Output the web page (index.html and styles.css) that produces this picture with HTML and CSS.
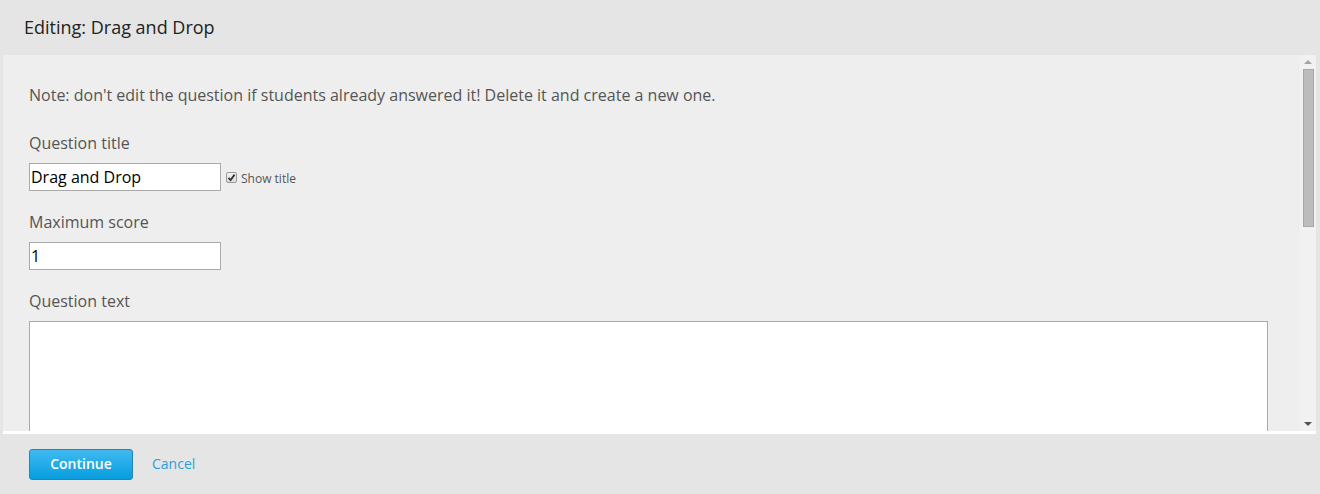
FILE: index.html
```html
<!DOCTYPE html>
<html>
<head>
<meta charset="utf-8">
<link rel="stylesheet" href="styles.css">
</head>
<body>
<div class="header">Editing: Drag and Drop</div>
<div class="panel">
  <div class="scroller">
    <div class="content">
      <p class="note">Note: don't edit the question if students already answered it! Delete it and create a new one.</p>
      <div class="field">
        <div class="label">Question title</div>
        <div class="row">
          <div class="input">Drag and Drop</div>
          <label class="check"><span class="box"><svg width="9" height="9" viewBox="0 0 9 9"><path d="M1.5 4.8 L3.6 7 L7.6 1.6" fill="none" stroke="#333" stroke-width="1.8"/></svg></span>Show title</label>
        </div>
      </div>
      <div class="field">
        <div class="label">Maximum score</div>
        <div class="input">1</div>
      </div>
      <div class="field">
        <div class="label">Question text</div>
        <div class="textarea"></div>
      </div>
    </div>
    <div class="scrollbar">
      <div class="arrow up"></div>
      <div class="thumb"></div>
      <div class="spacer"></div>
      <div class="arrow down"></div>
    </div>
  </div>
</div>
<div class="footer">
  <button class="btn">Continue</button>
  <a class="cancel">Cancel</a>
</div>
</body>
</html>
```
FILE: styles.css
```css
html, body {
  margin: 0;
  padding: 0;
}
body {
  width: 1320px;
  height: 494px;
  overflow: hidden;
  background: #e5e5e5;
  font-family: "Open Sans", "Noto Sans", sans-serif;
  color: #555;
}
.header {
  height: 55px;
  line-height: 55px;
  padding-left: 24px;
  font-size: 18px;
  color: #222;
}
.panel {
  margin: 0 4px 0 3px;
  height: 379px;
  background: #fff;
  padding-bottom: 3px;
  box-sizing: border-box;
}
.scroller {
  display: flex;
  height: 376px;
  background: #eee;
}
.content {
  flex: 1;
  overflow: hidden;
  padding: 29px 32px 0 26px;
}
.note {
  margin: 0 0 26px;
  font-size: 16px;
  line-height: 22px;
}
.field {
  margin-bottom: 20px;
}
.label {
  font-size: 16px;
  line-height: 22px;
  margin-bottom: 9px;
}
.row {
  display: flex;
  align-items: center;
}
.input {
  width: 192px;
  height: 28px;
  box-sizing: border-box;
  border: 1px solid #aaa;
  background: #fff;
  font-size: 16px;
  line-height: 26px;
  padding-left: 1px;
  color: #000;
}
.check {
  display: flex;
  align-items: center;
  margin-left: 5px;
  font-size: 12px;
  color: #555;
  padding-top: 2px;
}
.box {
  width: 11px;
  height: 11px;
  box-sizing: border-box;
  border: 1px solid #9a9a9a;
  border-radius: 2px;
  background: linear-gradient(#f4f4f4, #dcdcdc);
  display: flex;
  align-items: center;
  justify-content: center;
  margin-right: 4px;
  margin-top: -2px;
}
.textarea {
  width: 1239px;
  height: 200px;
  box-sizing: border-box;
  border: 1px solid #aaa;
  background: #fff;
}
.scrollbar {
  width: 16px;
  background: #f1f1f1;
  display: flex;
  flex-direction: column;
  align-items: center;
  padding: 5px 0 5px;
  box-sizing: border-box;
}
.arrow {
  width: 0;
  height: 0;
  border-left: 4px solid transparent;
  border-right: 4px solid transparent;
}
.arrow.up {
  border-bottom: 4px solid #a3a3a3;
}
.arrow.down {
  border-top: 4px solid #505050;
}
.thumb {
  margin-top: 5px;
  width: 11px;
  height: 158px;
  box-sizing: border-box;
  background: #bcbcbc;
  border: 1px solid #a8a8a8;
}
.spacer {
  flex: 1;
}
.footer {
  height: 60px;
  padding: 15px 0 0 29px;
  box-sizing: border-box;
  display: flex;
  align-items: flex-start;
}
.btn {
  width: 104px;
  height: 31px;
  border: 1px solid #1a87c4;
  border-radius: 3px;
  background: linear-gradient(#40baf0, #079ddf);
  color: #fff;
  font-family: "Open Sans", "Noto Sans", sans-serif;
  font-weight: 600;
  font-size: 14px;
  padding: 0 0 2px;
}
.cancel {
  margin-left: 19px;
  font-size: 14px;
  line-height: 29px;
  color: #2aa0dc;
}
```
